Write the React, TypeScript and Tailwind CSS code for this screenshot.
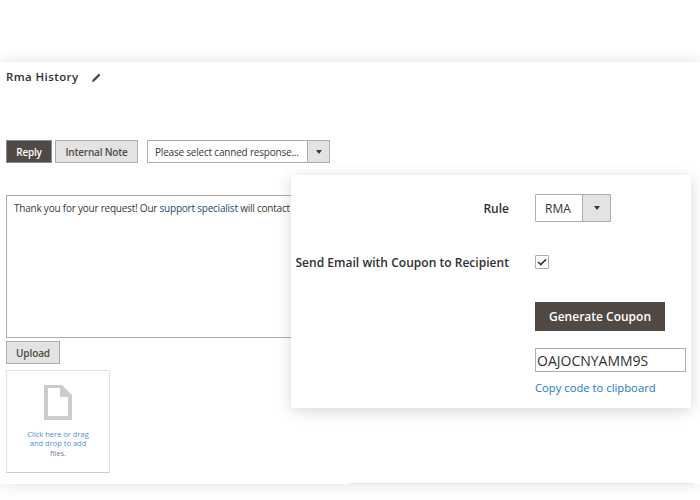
import React from 'react';

const font = { fontFamily: '"Open Sans", sans-serif' };

const Arrow = () => (
  <span className="block w-0 h-0 border-l-[3.5px] border-r-[3.5px] border-t-[4px] border-l-transparent border-r-transparent border-t-[#41362f]" />
);

const App: React.FC = () => {
  return (
    <div style={font} className="relative w-[700px] h-[500px] overflow-hidden bg-white text-[#41362f]">
      <div className="pt-[62px]">
        <div className="relative h-[422px] bg-white shadow-[0_0_14px_rgba(0,0,0,0.13)] pl-[6px]">
          <div className="flex items-center h-[30px] text-[11.5px] font-semibold tracking-[0.4px] text-[#303030]">
            <span className="leading-none">Rma History</span>
            <svg className="ml-[12px]" width="11" height="11" viewBox="0 0 11 11">
              <path d="M1 10 L1.6 7.8 L7.8 1.6 L9.4 3.2 L3.2 9.4 Z" fill="#514943" />
            </svg>
          </div>

          <div className="flex items-stretch h-[23px] mt-[48px] text-[10px]">
            <button className="w-[46px] pt-px bg-[#514943] border border-[#8a8a8a] text-white font-semibold tracking-[-0.2px]">Reply</button>
            <button className="w-[83px] ml-[3px] pt-px bg-[#e3e3e3] border border-[#adadad] text-[#514943] font-semibold tracking-[-0.2px]">Internal Note</button>
            <div className="flex w-[183px] ml-[9px] bg-white border border-[#adadad]">
              <span className="flex-1 flex items-center pl-[7px] pt-px text-[#41362f] whitespace-nowrap tracking-[-0.2px]">Please select canned response...</span>
              <span className="flex items-center justify-center w-[22px] bg-[#e3e3e3] border-l border-[#adadad]">
                <Arrow />
              </span>
            </div>
          </div>

          <div className="w-[600px] h-[143px] mt-[32px] bg-white border border-[#adadad] px-[7px] py-[5px] text-[10px] tracking-[-0.22px] leading-[14px] whitespace-nowrap">
            Thank you for your request! Our <span className="text-[#1a4a72]">support specialist</span> will contact you shortly.
          </div>

          <button className="block w-[54px] h-[23px] mt-[3px] pt-px bg-[#e3e3e3] border border-[#adadad] text-[10px] tracking-[-0.1px] font-semibold text-[#514943]">Upload</button>

          <div className="flex flex-col items-center w-[104px] h-[103px] mt-[6px] bg-white border border-[#cccccc] border-t-[#e3e3e3] border-l-[#e3e3e3] border-r-[#e3e3e3]">
            <svg className="mt-[14px]" width="28" height="35" viewBox="0 0 28 35">
              <path fillRule="evenodd" d="M0 0 H18 L28 10 V35 H0 Z M4 3 V31 H24 V12 H16 V3 Z" fill="#cccccc" />
              <path d="M18 2 L26 10 H18 Z" fill="#cccccc" />
            </svg>
            <p className="mt-[9.5px] w-[72px] text-center text-[7.5px] leading-[9.5px] text-[#4a90e2]">
              Click here or drag and drop to add <span className="text-[#6f7f9a]">files.</span>
            </p>
          </div>

          <div className="absolute left-[349px] top-[421px] w-[345px] h-px bg-[#e6e6e6]" />
        </div>
      </div>

      <div className="absolute left-[291px] top-[175px] w-[400px] h-[233px] bg-white shadow-[0_3px_14px_rgba(0,0,0,0.16)]">
        <div className="grid grid-cols-[218px_1fr] gap-x-[26px] pt-[19px] text-[12px]">
          <div className="flex items-center justify-end h-[28px] pt-px font-semibold text-[#303030]">Rule</div>
          <div className="flex w-[76px] h-[28px] border border-[#adadad] rounded-[1px]">
            <span className="flex items-center pl-[9px] pt-px w-[46px] text-[#303030]">RMA</span>
            <span className="flex items-center justify-center flex-1 bg-[#e3e3e3] border-l border-[#adadad]">
              <Arrow />
            </span>
          </div>

          <div className="flex items-center justify-end h-[14px] mt-[33px] pt-px font-semibold tracking-[0.03px] text-[#303030] whitespace-nowrap">Send Email with Coupon to Recipient</div>
          <div className="mt-[33px]">
            <span className="flex items-center justify-center w-[14px] h-[14px] border border-[#adadad] rounded-[1px]">
              <svg width="10" height="8" viewBox="0 0 10 8">
                <path d="M1 4 L3.8 6.6 L9 1.2" fill="none" stroke="#303030" strokeWidth="1.6" />
              </svg>
            </span>
          </div>

          <div />
          <div className="mt-[33px]">
            <button className="block w-[130px] h-[29px] bg-[#514943] text-white font-semibold">Generate Coupon</button>
            <div className="flex items-center w-[151px] h-[24px] mt-[17px] border border-[#adadad] pl-[1px] text-[14px] text-[#303030]">OAJOCNYAMM9S</div>
            <a className="block mt-[8px] text-[11.25px] text-[#1979c3]">Copy code to clipboard</a>
          </div>
        </div>
      </div>
    </div>
  );
};

export default App;
